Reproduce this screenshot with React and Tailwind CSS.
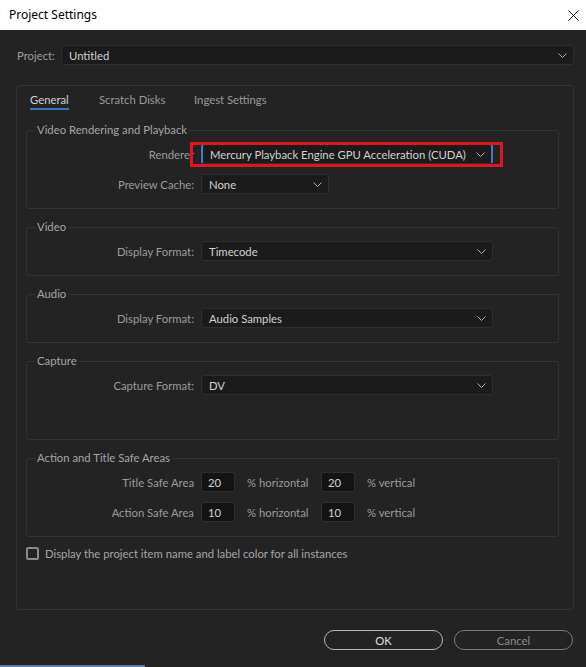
import React from 'react'

const font = { fontFamily: 'Lato, "Open Sans", sans-serif' }

const Chevron = () => (
  <svg width="9" height="5" viewBox="0 0 9 5" className="shrink-0">
    <path d="M0.5 0.5 L4.5 4.5 L8.5 0.5" fill="none" stroke="#b0b0b0" strokeWidth="1" />
  </svg>
)

const Select = ({ value, className = '' }) => (
  <div className={`h-[20px] flex items-center justify-between bg-[#1b1b1b] border border-[#2e2e2e] rounded-[3px] pl-[7px] pr-[6px] text-[11.3px] text-[#d2d2d2] ${className}`}>
    <span className="leading-[14px] whitespace-nowrap pt-[1px]">{value}</span>
    <Chevron />
  </div>
)

const Row = ({ label, children, className = '' }) => (
  <div className={`flex items-center h-[20px] ${className}`}>
    <div className="w-[167px] text-right text-[11.3px] text-[#9c9c9c] leading-[14px] whitespace-nowrap pt-[1px]">{label}</div>
    <div className="ml-[7px] flex items-center">{children}</div>
  </div>
)

const Group = ({ title, children, pb = 'pb-[14px]', className = '' }) => (
  <fieldset className={`border border-[#333333] rounded-[3px] ${pb} ${className}`}>
    <legend className="ml-[8px] px-[2px] text-[11.3px] leading-[14px] text-[#a6a6a6]">{title}</legend>
    <div className="mt-[7px]">{children}</div>
  </fieldset>
)

const NumInput = ({ value }) => (
  <div className="w-[34px] h-[20px] bg-[#141414] border border-[#2e2e2e] rounded-[2px] pl-[6px] pt-[1px] flex items-center text-[11.3px] text-[#d2d2d2] leading-[14px]">
    {value}
  </div>
)

const SafeRow = ({ label, h, v, className = '' }) => (
  <Row label={label} className={className}>
    <NumInput value={h} />
    <span className="ml-[12px] w-[74px] pt-[1px] text-[11.3px] text-[#9c9c9c] leading-[14px]">% horizontal</span>
    <NumInput value={v} />
    <span className="ml-[12px] pt-[1px] text-[11.3px] text-[#9c9c9c] leading-[14px]">% vertical</span>
  </Row>
)

export default function App() {
  return (
    <div className="relative w-[586px] h-[667px] bg-[#232323] overflow-hidden" style={font}>
      {/* title bar */}
      <div className="h-[30px] bg-white flex items-center justify-between pl-[9px] pr-[7px]">
        <span className="text-[12px] text-black leading-[14px]" style={{ fontFamily: '"Noto Sans", sans-serif' }}>Project Settings</span>
        <svg width="11" height="11" viewBox="0 0 11 11">
          <path d="M0.5 0.5 L10.5 10.5 M10.5 0.5 L0.5 10.5" stroke="#111" strokeWidth="1" />
        </svg>
      </div>

      {/* project row */}
      <div className="mt-[15px] flex items-center h-[20px] pl-[17px] pr-[12px]">
        <span className="w-[44px] text-[11.3px] text-[#9c9c9c] leading-[14px] pt-[1px]">Project:</span>
        <Select value="Untitled" className="flex-1" />
      </div>

      {/* tab panel */}
      <div className="mt-[20px] ml-[16px] w-[558px] h-[525px] border border-[#333333] rounded-[3px]">
        <div className="flex pl-[13px] pt-[7px] text-[11.3px] leading-[14px]">
          <div className="w-[69px]">
            <div className="inline-block">
              <div className="text-[#d0d0d0]">General</div>
              <div className="mt-[1px] h-[2px] bg-[#3a77c0]" />
            </div>
          </div>
          <div className="w-[95px] text-[#9a9a9a]">Scratch Disks</div>
          <div className="text-[#9a9a9a]">Ingest Settings</div>
        </div>

        <div className="mt-[13px] pl-[9px] pr-[14px]">
          <Group title="Video Rendering and Playback">
            <Row label="Renderer">
              <Select
                value="Mercury Playback Engine GPU Acceleration (CUDA)"
                className="w-[292px] border-l-[#3b7bd0] border-r-[#3b7bd0] border-l-2 border-r-2"
              />
            </Row>
            <Row label="Preview Cache:" className="mt-[10px]">
              <Select value="None" className="w-[128px]" />
            </Row>
          </Group>

          <Group title="Video" className="mt-[11px]">
            <Row label="Display Format:">
              <Select value="Timecode" className="w-[292px]" />
            </Row>
          </Group>

          <Group title="Audio" className="mt-[11px]">
            <Row label="Display Format:">
              <Select value="Audio Samples" className="w-[292px]" />
            </Row>
          </Group>

          <Group title="Capture" className="mt-[11px]" pb="pb-[44px]">
            <Row label="Capture Format:">
              <Select value="DV" className="w-[292px]" />
            </Row>
          </Group>

          <Group title="Action and Title Safe Areas" className="mt-[11px]">
            <SafeRow label="Title Safe Area" h="20" v="20" />
            <SafeRow label="Action Safe Area" h="10" v="10" className="mt-[10px]" />
          </Group>

          <div className="mt-[10px] flex items-center h-[13px]">
            <div className="w-[13px] h-[13px] border-2 border-[#8a8a8a] rounded-[2px]" />
            <span className="ml-[6px] pt-[1px] text-[11.3px] text-[#a6a6a6] leading-[14px]">
              Display the project item name and label color for all instances
            </span>
          </div>
        </div>
      </div>

      {/* buttons */}
      <div className="mt-[20px] flex justify-end gap-[11px] pr-[13px]">
        <button className="w-[119px] h-[20px] rounded-full border border-[#b5b5b5] text-[11.3px] text-[#e0e0e0] leading-[14px] pt-[1px]">
          OK
        </button>
        <button className="w-[119px] h-[20px] rounded-full border border-[#7a7a7a] text-[11.3px] text-[#8c8c8c] leading-[14px] pt-[1px]">
          Cancel
        </button>
      </div>

      {/* red highlight annotation */}
      <div className="absolute left-[190px] top-[142px] w-[313px] h-[25px] border-[3px] border-[#e3141f]" />

      {/* bottom taskbar sliver */}
      <div className="absolute bottom-0 left-0 w-[145px] h-[2px] bg-[#5a7fb3]" />
    </div>
  )
}
